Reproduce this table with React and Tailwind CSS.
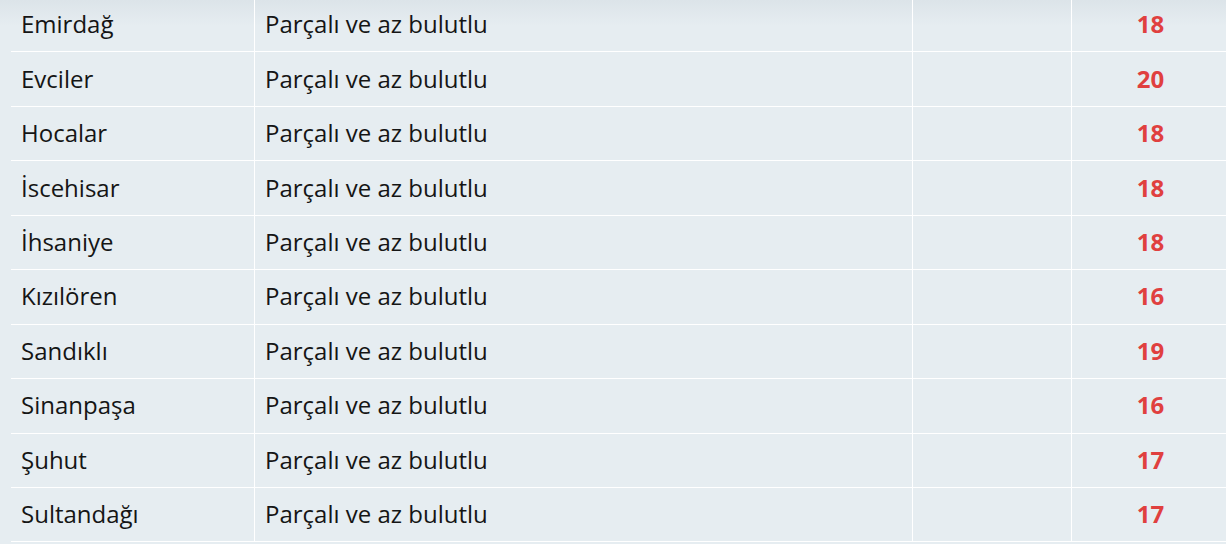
const rows = [
  { name: "Emirdağ", desc: "Parçalı ve az bulutlu", temp: 18 },
  { name: "Evciler", desc: "Parçalı ve az bulutlu", temp: 20 },
  { name: "Hocalar", desc: "Parçalı ve az bulutlu", temp: 18 },
  { name: "İscehisar", desc: "Parçalı ve az bulutlu", temp: 18 },
  { name: "İhsaniye", desc: "Parçalı ve az bulutlu", temp: 18 },
  { name: "Kızılören", desc: "Parçalı ve az bulutlu", temp: 16 },
  { name: "Sandıklı", desc: "Parçalı ve az bulutlu", temp: 19 },
  { name: "Sinanpaşa", desc: "Parçalı ve az bulutlu", temp: 16 },
  { name: "Şuhut", desc: "Parçalı ve az bulutlu", temp: 17 },
  { name: "Sultandağı", desc: "Parçalı ve az bulutlu", temp: 17 },
];

export default function App() {
  return (
    <div
      className="relative h-[544px] w-[1226px] overflow-hidden bg-[#e6edf1] text-[#151515]"
      style={{ fontFamily: '"Open Sans", "Liberation Sans", sans-serif' }}
    >
      {/* soft shade along the top edge */}
      <div className="pointer-events-none absolute inset-x-0 top-0 h-[26px] bg-gradient-to-b from-[#dce4e9] to-[#e6edf1]/0" />
      <div className="relative -mt-[2px] pl-[11px]">
        {rows.map((r) => (
          <div key={r.name} className="flex h-[54.44px] border-b border-white">
            <div className="flex w-[244px] items-center border-r border-white pl-[10px] pb-[1px] text-[24px]">
              {r.name}
            </div>
            <div className="flex w-[658px] items-center border-r border-white pl-[10px] pb-[1px] text-[24px]">
              {r.desc}
            </div>
            <div className="w-[159px] border-r border-white" />
            <div className="flex flex-1 items-center justify-center pl-[3px] pb-[1px] text-[24px] font-bold text-[#e0403f]">
              {r.temp}
            </div>
          </div>
        ))}
      </div>
    </div>
  );
}
